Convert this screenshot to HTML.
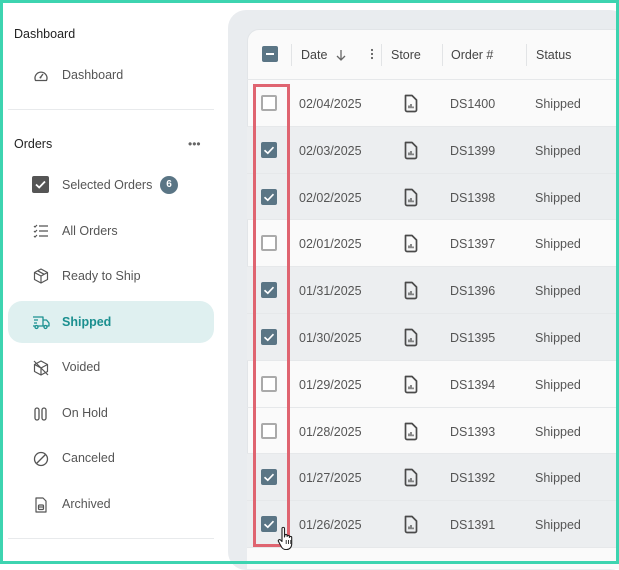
<!DOCTYPE html>
<html><head><style>
*{margin:0;padding:0;box-sizing:border-box}
body{width:619px;height:564px;overflow:hidden;background:#fff;font-family:"Liberation Sans",Arial,sans-serif;position:relative}
.frame{position:absolute;inset:0;border:3px solid #3dd4b0;z-index:20;pointer-events:none}
.abs{position:absolute}
.h{font-size:12.5px;color:#222;}
.it{position:absolute;left:62px;font-size:12.5px;color:#555}
.ic{position:absolute;left:32px;width:18px;height:18px}
.div{position:absolute;left:8px;width:206px;height:1px;background:#e8eaec}
.panel{position:absolute;left:228px;top:10px;width:400px;height:560px;background:#e9ecef;border-radius:18px}
.card{position:absolute;left:247px;top:29px;width:380px;height:540px;background:#fafafa;border-radius:12px;overflow:hidden;border:1px solid #e2e5e8}
.row{position:absolute;left:0;width:380px;height:47px;border-top:1px solid #e6e8ea}
.row.s{background:#eceef0}
.cell{position:absolute;top:1px;line-height:46px;font-size:12.5px;color:#555}
.cb{position:absolute;left:14px;top:16px;width:16px;height:16px;border-radius:2px}
.cb.off{border:2px solid #aaa;background:#fff}
.cb.on{background:#5a7585}
.sep{position:absolute;top:14px;width:1px;height:22px;background:#e2e4e6}
.hd{position:absolute;top:1px;line-height:48px;font-size:12.5px;color:#444}
</style></head><body>
<div class="frame"></div>

<div class="abs h" style="left:14px;top:27px">Dashboard</div>
<svg class="ic" style="top:67px" viewBox="0 0 18 18"><path d="M3.5 13.5 A6 6 0 1 1 14.5 13.5 Z" fill="none" stroke="#555" stroke-width="1.3" stroke-linejoin="round"/><path d="M8 11 L11 7" stroke="#555" stroke-width="1.3"/><circle cx="8.5" cy="10.5" r="1" fill="#555"/></svg>
<div class="it" style="top:68px">Dashboard</div>
<div class="div" style="top:109px"></div>
<div class="abs h" style="left:14px;top:137px">Orders</div>
<div class="abs" style="left:188px;top:137px;font-size:12px;color:#666;letter-spacing:0px">•••</div>

<div class="abs" style="left:32px;top:176px;width:17px;height:17px;background:#555;border-radius:2px"></div>
<svg class="abs" style="left:32px;top:176px" width="17" height="17"><path d="M4 8.5 L7.2 11.5 L13 5.5" fill="none" stroke="#fff" stroke-width="1.8"/></svg>
<div class="it" style="top:178px">Selected Orders</div>
<div class="abs" style="left:160px;top:176px;width:18px;height:18px;border-radius:9px;background:#5a7585;color:#fff;font-size:10px;font-weight:bold;text-align:center;line-height:18px">6</div>

<svg class="ic" style="top:222px" viewBox="0 0 18 18" fill="none" stroke="#555" stroke-width="1.2"><path d="M2 4l1 1 2-2M2 9l1 1 2-2M2 14l1 1 2-2M7 4h9M7 9h9M7 14h9"/></svg>
<div class="it" style="top:224px">All Orders</div>

<svg class="ic" style="top:267px" viewBox="0 0 18 18" fill="none" stroke="#555" stroke-width="1.2" stroke-linejoin="round"><path d="M9 2 L15.5 5.5 V12.5 L9 16 L2.5 12.5 V5.5 Z M2.5 5.5 L9 9 L15.5 5.5 M9 9 V16 M5.7 3.8 L12.2 7.3"/></svg>
<div class="it" style="top:269px">Ready to Ship</div>

<div class="abs" style="left:8px;top:301px;width:206px;height:42px;background:#dff0f0;border-radius:14px"></div>
<svg class="ic" style="top:313px" viewBox="0 0 18 18" fill="none" stroke="#1a9090" stroke-width="1.3" stroke-linejoin="round"><path d="M1 4h10v9H1M11 7h3.5l2.5 3v3h-6M2 7h4M2 10h3"/><circle cx="4.5" cy="14" r="1.5" fill="#dff0f0"/><circle cx="13.5" cy="14" r="1.5" fill="#dff0f0"/></svg>
<div class="it" style="top:315px;color:#1a8f8f;font-weight:bold">Shipped</div>

<svg class="ic" style="top:359px" viewBox="0 0 18 18" fill="none" stroke="#555" stroke-width="1.2" stroke-linejoin="round"><path d="M9 2 L15.5 5.5 V12.5 L9 16 L2.5 12.5 V5.5 Z M2.5 5.5 L9 9 L15.5 5.5 M9 9 V16 M2 2 L16 16"/></svg>
<div class="it" style="top:360px">Voided</div>

<svg class="ic" style="top:405px" viewBox="0 0 18 18" fill="none" stroke="#555" stroke-width="1.3"><rect x="3" y="3" width="4" height="12" rx="2"/><rect x="10" y="3" width="4" height="12" rx="2"/></svg>
<div class="it" style="top:406px">On Hold</div>

<svg class="ic" style="top:450px" viewBox="0 0 18 18" fill="none" stroke="#555" stroke-width="1.3"><circle cx="9" cy="9" r="6.5"/><path d="M4.5 13.5 L13.5 4.5"/></svg>
<div class="it" style="top:451px">Canceled</div>

<svg class="ic" style="top:496px" viewBox="0 0 18 18" fill="none" stroke="#555" stroke-width="1.2" stroke-linejoin="round"><path d="M4 2h7l3 3v11H4Z"/><rect x="6.5" y="9" width="5" height="4.5" rx="1"/><path d="M6.5 11h5"/></svg>
<div class="it" style="top:497px">Archived</div>
<div class="div" style="top:538px"></div>

<div class="panel"></div>
<div class="card">
  <div class="cb on" style="top:16px;left:14px"></div>
  <div class="abs" style="left:18px;top:23px;width:8px;height:2px;background:#fff"></div>
  <div class="sep" style="left:43px"></div>
  <div class="hd" style="left:53px">Date</div>
  <svg class="abs" style="left:86px;top:18px" width="14" height="14" fill="none" stroke="#666" stroke-width="1.3"><path d="M7 2v10M3 8l4 4 4-4"/></svg>
  <div class="abs" style="left:123px;top:18px;width:2px;height:12px;background:radial-gradient(circle,#666 1px,transparent 1.3px) 0 0/2px 4px"></div>
  <div class="sep" style="left:133px"></div>
  <div class="hd" style="left:143px">Store</div>
  <div class="sep" style="left:194px"></div>
  <div class="hd" style="left:203px">Order #</div>
  <div class="sep" style="left:278px"></div>
  <div class="hd" style="left:288px">Status</div>
</div>

<div id="rows" class="abs" style="left:247px;top:79px;width:380px;height:490px;overflow:hidden"></div>

<div class="abs" style="left:253px;top:84px;width:37px;height:463px;border:3px solid #df6470;z-index:5"></div>
<svg class="abs" style="left:276px;top:526px;z-index:6" width="22" height="26" viewBox="0 0 22 26"><path d="M6 2.5c0-1.5 2.5-1.5 2.5 0V11l.3-1.5c0-1.4 2.3-1.4 2.3 0v1c0-1.4 2.3-1.4 2.3 0v1c0-1.4 2.3-1.4 2.3 0V18c0 3-2 5.5-5 5.5H9.5c-2 0-3-1-4-2.5L2.5 15.5c-.8-1.4 1-2.6 2-1.5L6 15.5Z" fill="#fff" stroke="#222" stroke-width="1.1" stroke-linejoin="round"/><path d="M10.2 14v4M12.5 14v4M14.8 14v4" stroke="#222" stroke-width=".9"/></svg>

<script>
var d=[["02/04/2025","DS1400",0],["02/03/2025","DS1399",1],["02/02/2025","DS1398",1],["02/01/2025","DS1397",0],["01/31/2025","DS1396",1],["01/30/2025","DS1395",1],["01/29/2025","DS1394",0],["01/28/2025","DS1393",0],["01/27/2025","DS1392",1],["01/26/2025","DS1391",1]];
var h="";
d.forEach(function(r,i){
h+='<div class="row'+(r[2]?' s':'')+'" style="top:'+(i*46.8)+'px">'+
'<div class="cb '+(r[2]?'on':'off')+'" style="top:15px"></div>'+
(r[2]?'<svg class="abs" style="left:14px;top:15px" width="16" height="16"><path d="M3.5 8.2 L6.8 11.2 L12.5 5.2" fill="none" stroke="#fff" stroke-width="1.7"/></svg>':'')+
'<div class="cell" style="left:52px">'+r[0]+'</div>'+
'<svg class="abs" style="left:156px;top:14px" width="16" height="19" viewBox="0 0 16 19" fill="none" stroke="#4a4a4a" stroke-width="1.7" stroke-linejoin="round"><path d="M2.5 1.5h6.5l4.5 4.5v10a1.5 1.5 0 0 1-1.5 1.5H4a1.5 1.5 0 0 1-1.5-1.5Z"/><path d="M6 14.2v-2.7M8 14.2v-4.2M10 14.2v-1.7" stroke-width="1.3"/></svg>'+
'<div class="cell" style="left:203px">'+r[1]+'</div>'+
'<div class="cell" style="left:288px">Shipped</div></div>';
});
h+='<div class="row" style="top:468px;background:#fafafa"></div>';
document.getElementById("rows").innerHTML=h;
</script>
</body></html>
